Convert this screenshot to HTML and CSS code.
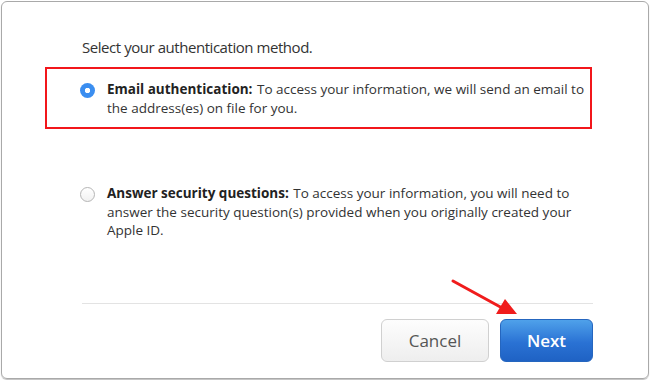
FILE: index.html
```html
<!DOCTYPE html>
<html>
<head>
<meta charset="utf-8">
<link rel="stylesheet" href="styles.css">
</head>
<body>
<div class="frame">
  <p class="heading">Select your authentication method.</p>
  <div class="highlight">
    <div class="option">
      <span class="radio checked"></span>
      <p class="desc"><b>Email authentication:</b> To access your information, we will send an email to the address(es) on file for you.</p>
    </div>
  </div>
  <div class="option option-plain">
    <span class="radio"></span>
    <p class="desc"><b>Answer security questions:</b> To access your information, you will need to answer the security question(s) provided when you originally created your Apple ID.</p>
  </div>
  <div class="footer">
    <button class="btn btn-cancel">Cancel</button>
    <button class="btn btn-next">Next</button>
  </div>
  <svg class="arrow" width="80" height="50" viewBox="0 0 80 50">
    <line x1="3" y1="3" x2="54" y2="31" stroke="#f01c1c" stroke-width="3" stroke-linecap="round"/>
    <polygon points="67,36 46,36 55,21" fill="#f01c1c"/>
  </svg>
</div>
</body>
</html>
```
FILE: styles.css
```css
* { box-sizing: border-box; }
html, body { margin: 0; padding: 0; background: #fff; }
body { width: 650px; height: 380px; overflow: hidden; font-family: "Open Sans", "Liberation Sans", sans-serif; color: #333; }
.frame {
  position: relative;
  margin: 1px;
  width: 648px;
  height: 378px;
  border: 1px solid #a9a9a9;
  border-radius: 6px;
  box-shadow: 0 1px 1px rgba(0,0,0,0.25);
  display: flex;
  flex-direction: column;
}
.heading {
  margin: 34px 0 0 80px;
  font-size: 15px;
  letter-spacing: -0.45px;
  line-height: 22px;
  color: #333;
}
.highlight {
  margin: 9px 0 0 43px;
  width: 547px;
  height: 62px;
  border: 2px solid #f2161b;
  padding: 11px 0 0 33px;
}
.option { display: flex; align-items: flex-start; gap: 12px; }
.option-plain { margin: 55px 0 0 78px; }
.radio {
  flex: none;
  width: 15px;
  height: 15px;
  margin-top: 3px;
  border-radius: 50%;
  border: 1px solid #b5b5b5;
  background: linear-gradient(#fff, #f1f1f1);
}
.radio.checked {
  border: none;
  background: radial-gradient(circle, #fff 0 2.4px, #3b8ef0 3px);
}
.desc {
  margin: 0;
  width: 482px;
  font-size: 13.5px;
  line-height: 18.5px;
  color: #333;
}
.desc b { color: #222; font-weight: 700; margin-right: 1px; }
.footer {
  margin: 63px 55px 0 80px;
  border-top: 1px solid #e3e3e3;
  padding-top: 15px;
  display: flex;
  justify-content: flex-end;
  gap: 11px;
}
.btn {
  height: 43px;
  border-radius: 6px;
  font-family: "Open Sans", "Liberation Sans", sans-serif;
  font-size: 17px;
  padding: 0;
}
.btn-cancel {
  width: 108px;
  border: 1px solid #d0d0d0;
  background: linear-gradient(#fdfdfd, #eeeeee);
  color: #555;
}
.btn-next {
  width: 93px;
  border: 1px solid #2566bf;
  background: linear-gradient(#4fa1ea, #2a72d4 55%, #1f62c4);
  color: #fff;
  font-weight: 600;
}
.arrow { position: absolute; left: 448px; top: 276px; }
```
